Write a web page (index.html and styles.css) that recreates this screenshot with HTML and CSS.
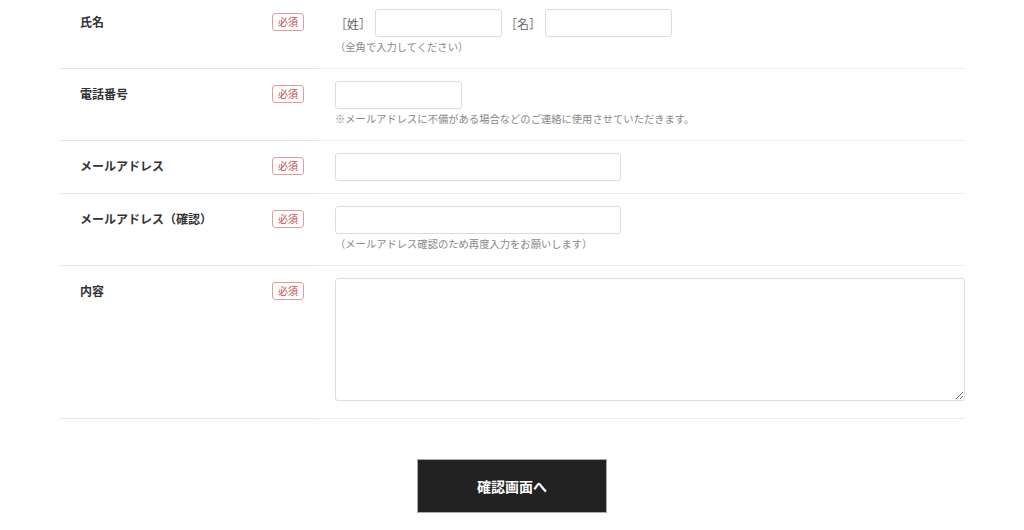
FILE: index.html
```html
<!DOCTYPE html>
<html lang="ja">
<head>
  <meta charset="UTF-8">
  <title>お問い合わせ</title>
  <link rel="stylesheet" href="styles.css">
</head>
<body>
  <!-- お問い合わせフォーム -->
  <form class="contact">
    <table class="contact-table">
      <tr>
        <th><span class="label">氏名</span><span class="req">必須</span></th>
        <td>
          <div class="name-row">
            <span class="bracket">［姓］</span><input type="text" class="input input-name">
            <span class="bracket">［名］</span><input type="text" class="input input-name">
          </div>
          <p class="note">（全角で入力してください）</p>
        </td>
      </tr>
      <tr>
        <th><span class="label">電話番号</span><span class="req">必須</span></th>
        <td>
          <input type="tel" class="input input-tel">
          <p class="note">※メールアドレスに不備がある場合などのご連絡に使用させていただきます。</p>
        </td>
      </tr>
      <tr>
        <th><span class="label">メールアドレス</span><span class="req">必須</span></th>
        <td>
          <input type="email" class="input input-mail">
        </td>
      </tr>
      <tr>
        <th><span class="label">メールアドレス（確認）</span><span class="req">必須</span></th>
        <td>
          <input type="email" class="input input-mail">
          <p class="note">（メールアドレス確認のため再度入力をお願いします）</p>
        </td>
      </tr>
      <tr>
        <th><span class="label">内容</span><span class="req">必須</span></th>
        <td>
          <textarea class="input input-text"></textarea>
        </td>
      </tr>
    </table>
    <div class="submit-area">
      <button type="button" class="btn-submit">確認画面へ</button>
    </div>
  </form>
</body>
</html>
```

FILE: styles.css
```css
* {
  margin: 0;
  padding: 0;
  box-sizing: border-box;
}

body {
  background-color: #fff;
  color: #333;
  font-family: "Noto Sans CJK JP", "Noto Sans", sans-serif;
}

/*フォーム全体*/
.contact {
  width: 906px;
  margin: -3px auto 0;
}

.contact-table {
  width: 100%;
  border-collapse: collapse;
}

/*項目名*/
.contact-table th {
  width: 259px;
  padding: 15px 14px 0 21px;
  vertical-align: top;
  text-align: left;
  border-bottom: 1px solid #eee6e6;
}

.label {
  float: left;
  font-size: 12px;
  font-weight: bold;
  line-height: 20px;
  color: #333;
}

/*必須マーク*/
.req {
  float: right;
  width: 32px;
  height: 18px;
  margin-top: 1px;
  border: 1px solid #e39b9b;
  border-radius: 3px;
  color: #c94a4a;
  font-size: 10px;
  font-weight: normal;
  line-height: 16px;
  text-align: center;
}

/*入力欄*/
.contact-table td {
  padding: 12px 0 12px 17px;
  vertical-align: top;
  border-bottom: 1px solid #ececec;
}

.input {
  display: block;
  height: 28px;
  border: 1px solid #dcdcdc;
  border-radius: 3px;
  background-color: #fff;
  font-family: inherit;
  font-size: 13px;
  padding: 0 8px;
}

.name-row {
  display: flex;
  align-items: center;
}

.bracket {
  font-size: 12px;
  color: #666;
  margin: 0 4px 0 0;
}

.name-row .bracket:nth-of-type(2) {
  margin-left: 3px;
}

.input-name {
  width: 127px;
}

.input-tel {
  width: 127px;
}

.input-mail {
  width: 286px;
}

.input-text {
  width: 630px;
  height: 123px;
  margin-bottom: 5px;
  padding: 6px 8px;
}

/*補足説明*/
.note {
  margin-top: 1px;
  font-size: 10.3px;
  line-height: 18px;
  color: #888;
}

/*送信ボタン*/
.submit-area {
  padding-top: 40px;
  text-align: center;
}

.btn-submit {
  width: 190px;
  height: 54px;
  border: 1px solid #aaa;
  background-color: #222;
  color: #fff;
  font-family: inherit;
  font-size: 14px;
  font-weight: bold;
  cursor: pointer;
}
```
